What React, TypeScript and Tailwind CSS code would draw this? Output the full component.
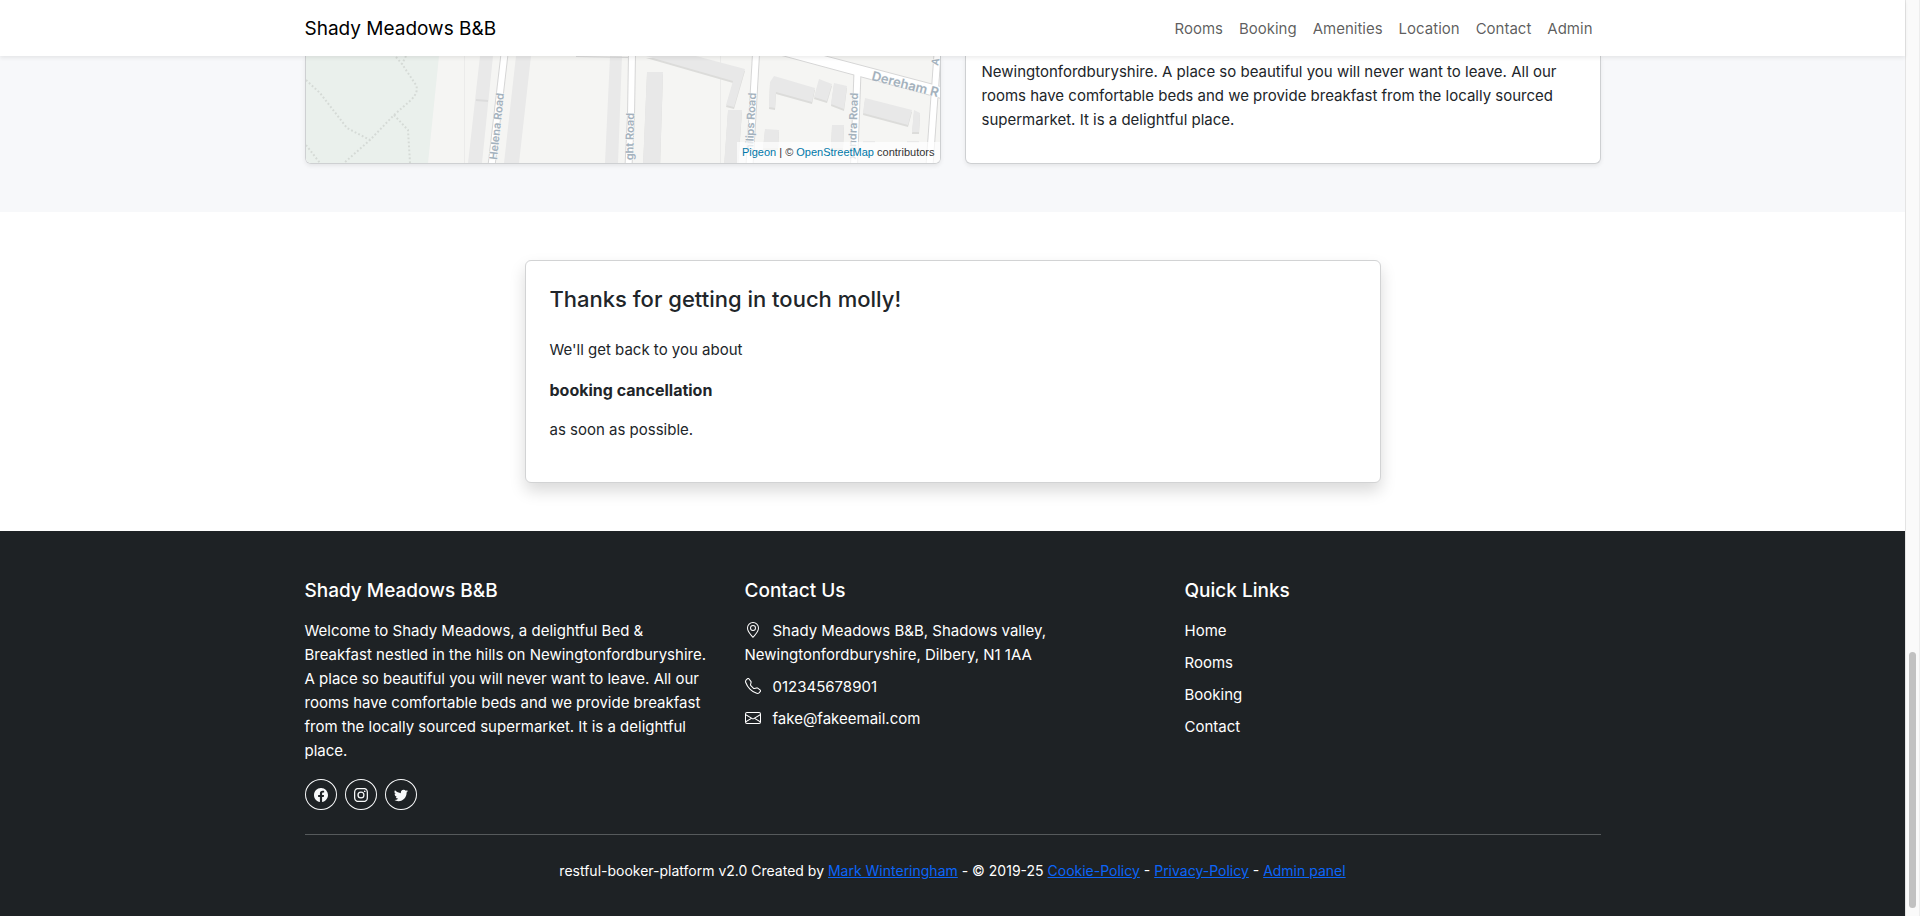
import type { ReactNode } from "react";
import { BsEnvelope, BsFacebook, BsGeoAlt, BsInstagram, BsTelephone, BsTwitter } from "react-icons/bs";

const navLinks = ["Rooms", "Booking", "Amenities", "Location", "Contact", "Admin"];
const quickLinks = ["Home", "Rooms", "Booking", "Contact"];
const social = [
  { name: "Facebook", Icon: BsFacebook },
  { name: "Instagram", Icon: BsInstagram },
  { name: "Twitter", Icon: BsTwitter },
];
const contact = [
  { Icon: BsGeoAlt, text: "Shady Meadows B&B, Shadows valley, Newingtonfordburyshire, Dilbery, N1 1AA" },
  { Icon: BsTelephone, text: "012345678901" },
  { Icon: BsEnvelope, text: "fake@fakeemail.com" },
];

const buildings = [
  "340,0 390,0 439,13 428,51 420,49 427,25",
  "468,20 509,32 506,46 470,36 469,52 463,51 464,26",
  "513,23 526,28 521,45 508,41",
  "528,27 541,30 538,53 525,48",
  "559,42 606,54 602,69 557,57",
  "608,54 614,57 613,76 606,76",
  "459,73 473,74 472,92 457,92",
  "526,69 538,69 537,92 525,92",
  "422,54 436,54 432,110 418,110",
  "341,16 357,16 354,110 337,110",
];

const strips = [
  "174,0 187,0 176,107 162,107",
  "210,0 225,0 213,107 198,107",
  "304,0 316,0 312,107 299,107",
];

const roads = [
  "M198.5 -2 L185.5 110",
  "M326 -2 L325 60 L322.5 110",
  "M450 -2 L443.5 110",
  "M551.5 16 L548 110",
  "M631.5 -2 L623.5 110",
];

function Container({ children, className = "" }: { children: ReactNode; className?: string }) {
  return <div className={`mx-auto w-full max-w-[1320px] px-3 ${className}`}>{children}</div>;
}

function MapDrawing() {
  return (
    <svg viewBox="0 0 634 107" preserveAspectRatio="xMidYMid slice" className="block h-[107px] w-full" role="img" aria-label="Map">
      <rect width="634" height="107" fill="#f5f5f3" />
      <polygon points="0,0 133,0 122,107 0,107" fill="#eaf0ec" />
      <g fill="none" stroke="#d5dad6" strokeWidth="2" strokeDasharray="1.8 2.2">
        <path d="M90 1 L96 8 L110 29 Q113 36 105 44 L88 59 L64 84 L38 107" />
        <path d="M100 0 L96 8" />
        <path d="M0 24 L14 37 L41 72 L64 84" />
        <path d="M88 59 L102 74 L104 107" />
        <path d="M0 89 L14 107" />
      </g>
      <path d="M158.5 0V107M414.5 0V107" stroke="#ebebea" />
      <g fill="#e9e9e9">
        {strips.map((p) => (
          <polygon key={p} points={p} />
        ))}
      </g>
      <path d="M170 44 L182 45" stroke="#dcdcdc" strokeWidth="2" />
      <g fill="#dcdcda" transform="translate(0 2)">
        {buildings.map((p) => (
          <polygon key={p} points={p} />
        ))}
      </g>
      <g fill="#e8e8e8">
        {buildings.map((p) => (
          <polygon key={p} points={p} />
        ))}
      </g>
      <g fill="#e9e9e9">
        <rect x="557" y="85" width="12" height="2" />
        <rect x="601" y="85" width="12" height="2" />
      </g>
      <path d="M270 0.5 L323 1.5" stroke="#d8d8d8" fill="none" />
      <g stroke="#d6d6d6" strokeWidth="8" fill="none">
        {roads.map((d) => (
          <path key={d} d={d} />
        ))}
      </g>
      <polygon points="474,-1 516,-1 624,27.5 640,32 640,44 623,39 548,19" fill="#fff" stroke="#d6d6d6" />
      <g stroke="#fff" strokeWidth="6" fill="none">
        {roads.map((d) => (
          <path key={d} d={d} />
        ))}
      </g>
      <g
        fill="#a3b1bd"
        stroke="#f8f8f7"
        strokeWidth="1"
        paintOrder="stroke"
        fontFamily="Inter, sans-serif"
        fontSize="11"
        fontWeight="600"
      >
        <text transform="translate(191 104) rotate(-84)">Helena Road</text>
        <text transform="translate(328 57) rotate(-89)" textAnchor="end">ght Road</text>
        <text transform="translate(450 37) rotate(-87)" textAnchor="end">hilips Road</text>
        <text transform="translate(552 37) rotate(-88)" textAnchor="end">xandra Road</text>
        <text transform="translate(632 10) rotate(-78)" fontSize="10">A</text>
        <text transform="translate(565 24) rotate(14.5)" fontSize="13">Dereham R</text>
      </g>
    </svg>
  );
}

function FooterLink({ children }: { children: ReactNode }) {
  return (
    <a href="#" className="text-[#0b65f8] underline">
      {children}
    </a>
  );
}

export default function App() {
  return (
    <div className="flex min-h-screen bg-white font-[Inter,'Liberation_Sans',sans-serif] text-[15px] leading-6 text-[#212529]">
      <div className="flex min-w-0 flex-1 flex-col">
        <nav className="relative z-10 bg-white shadow-[0_2px_4px_rgba(0,0,0,0.075)]">
          <Container className="flex h-14 items-center justify-between pt-0.5">
            <a href="#" className="text-[19px] text-black">
              Shady Meadows B&amp;B
            </a>
            <ul className="flex">
              {navLinks.map((label) => (
                <li key={label}>
                  <a href="#" className="block p-2 text-black/65">
                    {label}
                  </a>
                </li>
              ))}
            </ul>
          </Container>
        </nav>

        <section className="bg-[#f7f8fa] pb-12">
          <Container className="grid grid-cols-2 gap-6">
            <div className="relative overflow-hidden rounded-b-md border border-t-0 border-[#ced0d2] shadow-[0_2px_4px_rgba(0,0,0,0.075)]">
              <MapDrawing />
              <div className="absolute right-0 bottom-0 bg-white/70 px-[5px] font-['Liberation_Sans',sans-serif] text-[11px] leading-[21px] text-[#333]">
                <a href="#" className="text-[#0078a8]">Pigeon</a>
                {" | © "}
                <a href="#" className="text-[#0078a8]">OpenStreetMap</a>
                {" contributors"}
              </div>
            </div>
            <div className="rounded-b-md border border-t-0 border-[#ced0d2] bg-white px-4 pt-1 shadow-[0_2px_4px_rgba(0,0,0,0.075)]">
              <p>
                Newingtonfordburyshire. A place so beautiful you will never want to leave. All our rooms have
                comfortable beds and we provide breakfast from the locally sourced supermarket. It is a delightful
                place.
              </p>
            </div>
          </Container>
        </section>

        <section className="py-12">
          <Container>
            <div className="mx-auto w-2/3 max-w-[856px] rounded-md border border-[#d2d3d4] bg-white px-6 pt-6 pb-10 shadow-[0_8px_16px_rgba(0,0,0,0.15)]">
              <h3 className="mb-6 text-[22px] leading-[29px] font-medium">Thanks for getting in touch molly!</h3>
              <p className="mb-4">We'll get back to you about</p>
              <p className="mb-4 text-base font-bold">booking cancellation</p>
              <p>as soon as possible.</p>
            </div>
          </Container>
        </section>

        <footer className="flex-1 bg-[#1e2225] pt-12 pb-8 text-white">
          <Container>
            <div className="grid grid-cols-3 gap-6">
              <div>
                <h5 className="mb-4 text-[19px] font-medium">Shady Meadows B&amp;B</h5>
                <p className="mb-4 pr-2">
                  Welcome to Shady Meadows, a delightful Bed &amp; Breakfast nestled in the hills on
                  Newingtonfordburyshire. A place so beautiful you will never want to leave. All our rooms have
                  comfortable beds and we provide breakfast from the locally sourced supermarket. It is a delightful
                  place.
                </p>
                <div className="flex gap-2">
                  {social.map(({ name, Icon }) => (
                    <a
                      key={name}
                      href="#"
                      aria-label={name}
                      className="flex h-[31px] w-8 items-center justify-center rounded-[50%] border border-[#f8f9fa] text-[14px] text-[#f8f9fa]"
                    >
                      <Icon />
                    </a>
                  ))}
                </div>
              </div>
              <div>
                <h5 className="mb-4 text-[19px] font-medium">Contact Us</h5>
                <ul className="flex flex-col gap-2">
                  {contact.map(({ Icon, text }) => (
                    <li key={text}>
                      <Icon className="mr-3 inline-block h-4 w-4 align-[-2px]" />
                      {text}
                    </li>
                  ))}
                </ul>
              </div>
              <div>
                <h5 className="mb-4 text-[19px] font-medium">Quick Links</h5>
                <ul className="flex flex-col gap-2">
                  {quickLinks.map((label) => (
                    <li key={label}>
                      <a href="#">{label}</a>
                    </li>
                  ))}
                </ul>
              </div>
            </div>
            <hr className="my-6 border-t border-[#565a5c]" />
            <p className="text-center text-[14px]">
              restful-booker-platform v2.0 Created by <FooterLink>Mark Winteringham</FooterLink> - © 2019-25{" "}
              <FooterLink>Cookie-Policy</FooterLink> - <FooterLink>Privacy-Policy</FooterLink> -{" "}
              <FooterLink>Admin panel</FooterLink>
            </p>
          </Container>
        </footer>
      </div>

      <div className="flex w-[15px] flex-col justify-end border-x border-l-[#e4e4e4] border-r-[#ededed] bg-[#fafafa] px-[3px] pb-2" aria-hidden="true">
        <div className="h-64 rounded-full bg-[#c1c1c1]" />
      </div>
    </div>
  );
}
